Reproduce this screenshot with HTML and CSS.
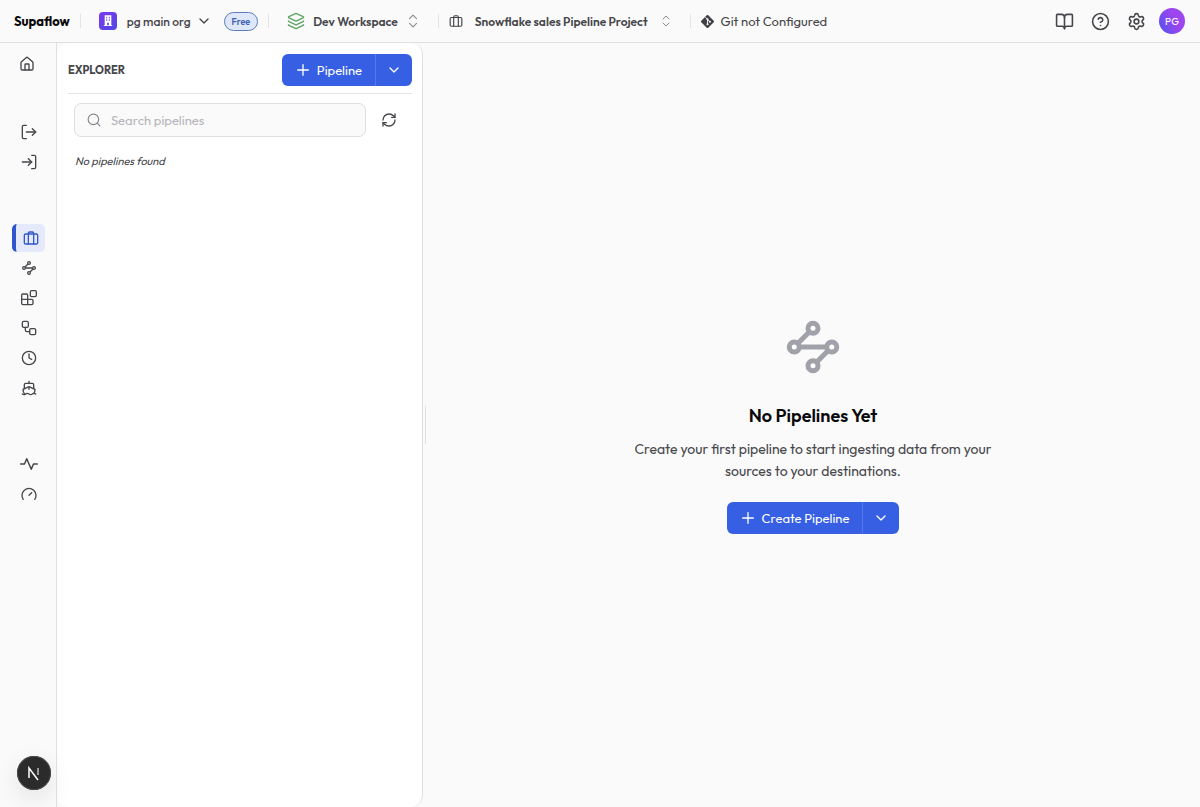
FILE: index.html
```html
<!DOCTYPE html>
<html lang="en">
<head>
    <meta charset="UTF-8">
    <meta name="viewport" content="width=device-width, initial-scale=1.0">
    <title>Supaflow</title>
    <link rel="stylesheet" href="styles.css">
</head>
<body>
    <!-- Shared icons -->
    <svg class="sprite" aria-hidden="true">
        <symbol id="chevron-down" viewBox="0 0 24 24"><path d="m6 9 6 6 6-6"/></symbol>
        <symbol id="chevrons" viewBox="0 0 24 24"><path d="m6 16 6 6 6-6"/><path d="m6 8 6-6 6 6"/></symbol>
        <symbol id="plus" viewBox="0 0 24 24"><path d="M4 12h16"/><path d="M12 4v16"/></symbol>
        <symbol id="luggage" viewBox="0 0 24 24"><rect x="2" y="6" width="20" height="15" rx="2"/><path d="M8 21V5a2 2 0 0 1 2-2h4a2 2 0 0 1 2 2v16"/></symbol>
        <symbol id="waypoints" viewBox="0 0 24 24"><path d="M12 4.5 4.5 12h15L12 19.5"/><g fill="#fff"><circle cx="12" cy="4.500" r="2"/><circle cx="4.500" cy="12" r="2"/><circle cx="19.500" cy="12" r="2"/><circle cx="12" cy="19.500" r="2"/></g></symbol>
    </svg>

    <header class="topbar">
        <a href="#" class="brand">Supaflow</a>
        <span class="divider"></span>
        <button class="picker org">
            <span class="org-badge">
                <svg viewBox="0 0 12 14"><path fill="#fff" fill-rule="evenodd" d="M2 0h8v12h1v1H1v-1h1zM4 2v2h1V2zM7 2v2h1V2zM4 5v2h1V5zM7 5v2h1V5zM5 9v3h2V9z"/></svg>
            </span>
            <span>pg main org</span>
            <svg class="icon"><use href="#chevron-down"/></svg>
        </button>
        <span class="plan">Free</span>
        <span class="divider"></span>
        <button class="picker workspace">
            <svg class="icon icon-lg green" viewBox="0 0 24 24"><path d="M12.8 2.2a2 2 0 0 0-1.7 0L2.6 6.1a1 1 0 0 0 0 1.8l8.600 3.900a2 2 0 0 0 1.700 0l8.600-3.900a1 1 0 0 0 0-1.800z"/><path d="M2 12a1 1 0 0 0 .6.9l8.600 3.900a2 2 0 0 0 1.700 0l8.500-3.900A1 1 0 0 0 22 12"/><path d="M2 17a1 1 0 0 0 .6.9l8.600 3.900a2 2 0 0 0 1.700 0l8.500-3.900A1 1 0 0 0 22 17"/></svg>
            <span>Dev Workspace</span>
            <svg class="icon icon-md faint"><use href="#chevrons"/></svg>
        </button>
        <span class="divider"></span>
        <button class="picker project">
            <svg class="icon icon-md"><use href="#luggage"/></svg>
            <span>Snowflake sales Pipeline Project</span>
            <svg class="icon icon-sm faint"><use href="#chevrons"/></svg>
        </button>
        <span class="divider"></span>
        <button class="picker git">
            <svg class="git-logo" viewBox="0 0 24 24"><path fill="#3f3f46" d="M10.6.6a2 2 0 0 1 2.800 0l10 10a2 2 0 0 1 0 2.800l-10 10a2 2 0 0 1-2.800 0l-10-10a2 2 0 0 1 0-2.800z"/><path d="m8 4 4 4v9M12 8l4.500 4.500" fill="none" stroke="#fafafa" stroke-width="1.800"/><g fill="#fafafa"><circle cx="12" cy="8" r="2"/><circle cx="12" cy="17" r="2"/><circle cx="16.500" cy="12.500" r="2"/></g></svg>
            <span>Git not Configured</span>
        </button>

        <div class="actions">
            <button class="icon-button" aria-label="Docs"><svg class="icon icon-xl" viewBox="0 0 24 24"><path d="M12 7v14"/><path d="M3 18a1 1 0 0 1-1-1V4a1 1 0 0 1 1-1h5a4 4 0 0 1 4 4 4 4 0 0 1 4-4h5a1 1 0 0 1 1 1v13a1 1 0 0 1-1 1h-6a3 3 0 0 0-3 3 3 3 0 0 0-3-3z"/></svg></button>
            <button class="icon-button" aria-label="Help"><svg class="icon icon-xl" viewBox="0 0 24 24"><circle cx="12" cy="12" r="10"/><path d="M9.100 9a3 3 0 0 1 5.800 1c0 2-3 3-3 3"/><path d="M12 17h.01"/></svg></button>
            <button class="icon-button" aria-label="Settings"><svg class="icon icon-xl" viewBox="0 0 24 24"><path d="M9.671 4.136a2.340 2.340 0 0 1 4.659 0 2.340 2.340 0 0 0 3.319 1.915 2.340 2.340 0 0 1 2.330 4.033 2.340 2.340 0 0 0 0 3.831 2.340 2.340 0 0 1-2.330 4.033 2.340 2.340 0 0 0-3.319 1.915 2.340 2.340 0 0 1-4.659 0 2.340 2.340 0 0 0-3.320-1.915 2.340 2.340 0 0 1-2.330-4.033 2.340 2.340 0 0 0 0-3.831A2.340 2.340 0 0 1 6.350 6.051a2.340 2.340 0 0 0 3.319-1.915"/><circle cx="12" cy="12" r="3"/></svg></button>
            <button class="avatar">PG</button>
        </div>
    </header>

    <div class="layout">
        <nav class="sidebar">
            <div class="nav-group home">
                <a href="#" class="nav-item" aria-label="Home"><svg class="icon" viewBox="0 0 24 24"><path d="M15 21v-8a1 1 0 0 0-1-1h-4a1 1 0 0 0-1 1v8"/><path d="M3 10a2 2 0 0 1 .7-1.500l7-6a2 2 0 0 1 2.600 0l7 6A2 2 0 0 1 21 10v9a2 2 0 0 1-2 2H5a2 2 0 0 1-2-2z"/></svg></a>
            </div>
            <div class="nav-group">
                <a href="#" class="nav-item" aria-label="Sources"><svg class="icon" viewBox="0 0 24 24"><path d="M8 2H4a2 2 0 0 0-2 2v16a2 2 0 0 0 2 2h4"/><path d="M8 12h14"/><path d="m17 7 5 5-5 5"/></svg></a>
                <a href="#" class="nav-item" aria-label="Destinations"><svg class="icon" viewBox="0 0 24 24"><path d="M16 2h4a2 2 0 0 1 2 2v16a2 2 0 0 1-2 2h-4"/><path d="M2 12h14"/><path d="m11 7 5 5-5 5"/></svg></a>
            </div>
            <div class="nav-group">
                <a href="#" class="nav-item active" aria-label="Projects"><svg class="icon"><use href="#luggage"/></svg></a>
                <a href="#" class="nav-item" aria-label="Pipelines"><svg class="icon"><use href="#waypoints"/></svg></a>
                <a href="#" class="nav-item" aria-label="Blocks"><svg class="icon" viewBox="0 0 24 24"><rect x="14" y="1" width="9" height="9" rx="2"/><path d="M10 22V8a2 2 0 0 0-2-2H3a2 2 0 0 0-2 2v12a2 2 0 0 0 2 2h13a2 2 0 0 0 2-2v-4a2 2 0 0 0-2-2H1"/></svg></a>
                <a href="#" class="nav-item" aria-label="Workflows"><svg class="icon" viewBox="0 0 24 24"><rect x="2" y="2" width="9" height="9" rx="2"/><path d="M6.500 11v4a2.500 2.500 0 0 0 2.500 2.500h4"/><rect x="13" y="13" width="9" height="9" rx="2"/></svg></a>
                <a href="#" class="nav-item" aria-label="Schedules"><svg class="icon" viewBox="0 0 24 24"><circle cx="12" cy="12" r="10"/><path d="M12 6v6l4 2"/></svg></a>
                <a href="#" class="nav-item" aria-label="Deployments"><svg class="icon" viewBox="0 0 24 24"><path d="M12 10.200V14M12 2v3"/><path d="M19 13V7a2 2 0 0 0-2-2H7a2 2 0 0 0-2 2v6"/><path d="M19.400 20A11.600 11.600 0 0 0 21 14l-8.200-3.600a2 2 0 0 0-1.600 0L3 14a11.600 11.600 0 0 0 2.800 7.800"/><path d="M2 21c.6.5 1.200 1 2.500 1 2.500 0 2.500-2 5-2 1.300 0 1.900.5 2.500 1s1.200 1 2.500 1c2.500 0 2.500-2 5-2 1.300 0 1.900.5 2.500 1"/></svg></a>
            </div>
            <div class="nav-group">
                <a href="#" class="nav-item" aria-label="Activity"><svg class="icon icon-lg" viewBox="0 0 24 24"><path d="M1 12h5l3-7 6 14 3-7h5"/></svg></a>
                <a href="#" class="nav-item" aria-label="Usage"><svg class="icon" viewBox="0 0 24 24"><path d="m12 14 4-4"/><path d="M3.300 20a10.500 10.500 0 1 1 17.400 0"/></svg></a>
            </div>
        </nav>

        <section class="explorer">
            <div class="explorer-header">
                <h2>EXPLORER</h2>
                <div class="split-button">
                    <button class="split-main"><svg class="icon"><use href="#plus"/></svg>Pipeline</button>
                    <button class="split-toggle" aria-label="More pipeline options"><svg class="icon"><use href="#chevron-down"/></svg></button>
                </div>
            </div>
            <div class="search-row">
                <label class="search">
                    <svg class="icon icon-md" viewBox="0 0 24 24"><circle cx="11" cy="11" r="9"/><path d="m22 22-4.500-4.500"/></svg>
                    <input type="search" placeholder="Search pipelines" aria-label="Search pipelines">
                </label>
                <button class="icon-button" aria-label="Refresh"><svg class="icon" viewBox="0 0 24 24"><path d="M3 12a9 9 0 0 1 9-9 9.750 9.750 0 0 1 6.740 2.740L21 8"/><path d="M21 3v5h-5"/><path d="M21 12a9 9 0 0 1-9 9 9.750 9.750 0 0 1-6.740-2.740L3 16"/><path d="M8 16H3v5"/></svg></button>
            </div>
            <p class="no-results">No pipelines found</p>
        </section>

        <div class="resizer"></div>

        <main class="content">
            <svg class="icon empty-icon"><use href="#waypoints"/></svg>
            <h1>No Pipelines Yet</h1>
            <p>Create your first pipeline to start ingesting data from your sources to your destinations.</p>
            <div class="split-button">
                <button class="split-main"><svg class="icon"><use href="#plus"/></svg>Create Pipeline</button>
                <button class="split-toggle" aria-label="More create options"><svg class="icon"><use href="#chevron-down"/></svg></button>
            </div>
        </main>
    </div>

    <button class="dev-badge" aria-label="Dev tools">
        <svg viewBox="0 0 16 16"><path d="M3 13V3l9 12" fill="none" stroke="#fff" stroke-width="1.500"/><path d="M12 3v7" fill="none" stroke="#bbb" stroke-width="1.500"/></svg>
    </button>
</body>
</html>
```
FILE: styles.css
```css
* {
    box-sizing: border-box;
}
body {
    margin: 0;
    min-height: 100vh;
    display: flex;
    flex-direction: column;
    font-family: Outfit, Lato, sans-serif;
    font-size: 13px;
    color: #46464b;
    background-color: #fafafa;
}
h1, h2, p {
    margin: 0;
}
a {
    color: inherit;
    text-decoration: none;
}
button {
    padding: 0;
    border: none;
    background: none;
    color: inherit;
    font: inherit;
    cursor: pointer;
}
.sprite {
    display: none;
}
.icon {
    width: 16px;
    height: 16px;
    flex-shrink: 0;
    fill: none;
    stroke: currentColor;
    stroke-width: 2;
    stroke-linecap: round;
    stroke-linejoin: round;
}
.icon-sm {
    width: 12px;
    height: 12px;
}
.icon-md {
    width: 14px;
    height: 14px;
}
.icon-lg {
    width: 18px;
    height: 18px;
}
.icon-xl {
    width: 19px;
    height: 19px;
}
.green {
    color: #5fa568;
}
.faint {
    color: #8b8b92;
}

/* Top bar */
.topbar {
    display: flex;
    align-items: center;
    height: 43px;
    padding: 0 15px 0 14px;
    border-bottom: 1px solid #e0e0e2;
    white-space: nowrap;
}
.brand {
    color: #09090b;
    font-weight: 700;
}
.divider {
    width: 1px;
    height: 14px;
    margin: 0 10px;
    background-color: #e4e4e7;
}
.picker {
    display: flex;
    align-items: center;
    gap: 8px;
    font-size: 12px;
    font-weight: 600;
}
.org {
    gap: 10px;
    margin: 0 12px 0 8px;
    font-weight: 500;
}
.org .icon {
    margin-left: -5px;
}
.org-badge {
    display: flex;
    align-items: center;
    justify-content: center;
    width: 18px;
    height: 18px;
    border-radius: 4px;
    background: linear-gradient(135deg, #7c3aed, #4f46e5);
}
.org-badge svg {
    width: 10px;
    height: 12px;
}
.plan {
    padding: 0 7px;
    border: 1px solid #5c7cc0;
    border-radius: 10px;
    background-color: #dfe8fb;
    color: #3f62b5;
    font-size: 9px;
    font-weight: 600;
    line-height: 17px;
}
.workspace {
    margin: 0 8px;
}
.project {
    gap: 12px;
    margin-right: 8px;
}
.git {
    gap: 7px;
    font-size: 13px;
    font-weight: 400;
}
.git-logo {
    width: 13px;
    height: 13px;
}
.actions {
    display: flex;
    align-items: center;
    margin-left: auto;
}
.icon-button {
    display: flex;
    justify-content: center;
}
.actions .icon-button {
    width: 36px;
}
.avatar {
    width: 26px;
    height: 26px;
    margin-left: 5px;
    border-radius: 50%;
    background: linear-gradient(60deg, #4f52ee, #9d45ef 60%);
    color: #fff;
    font-size: 10px;
}

/* Sidebar */
.layout {
    display: flex;
    flex: 1;
}
.sidebar {
    display: flex;
    flex-direction: column;
    gap: 48px;
    width: 57px;
    padding: 7px 11px 0 12px;
    border-right: 1px solid #e0e0e2;
}
.nav-group {
    display: flex;
    flex-direction: column;
    gap: 2px;
}
.home {
    margin: 0 3px -8px 0;
}
.nav-item {
    display: flex;
    align-items: center;
    justify-content: center;
    height: 28px;
    border-radius: 5px;
}
.nav-item.active {
    border-left: 4px solid #2f55cd;
    background-color: #e4eafb;
    color: #3157c8;
}

/* Explorer */
.explorer {
    width: 366px;
    padding: 11px 10px 11px 11px;
    border-right: 1px solid #e0e0e2;
    border-radius: 12px;
    background-color: #fff;
}
.explorer-header {
    display: flex;
    align-items: center;
    justify-content: space-between;
    padding-bottom: 7px;
    border-bottom: 1px solid #e4e4e7;
}
.explorer-header h2 {
    font-size: 11px;
    font-weight: 700;
}
.split-button {
    display: flex;
    height: 32px;
    border-radius: 6px;
    background-color: #365fe3;
    color: #fff;
}
.split-main {
    display: flex;
    align-items: center;
    gap: 6px;
    padding: 0 13px;
}
.split-toggle {
    display: flex;
    align-items: center;
    justify-content: center;
    width: 37px;
    border-left: 1px solid #5478e8;
}
.search-row {
    display: flex;
    align-items: center;
    gap: 15px;
    padding: 9px 15px 0 6px;
}
.search {
    display: flex;
    flex: 1;
    align-items: center;
    gap: 10px;
    height: 34px;
    padding: 0 12px;
    border: 1px solid #e0e0e2;
    border-radius: 7px;
    background-color: #fafafa;
    color: #85858d;
}
.search input {
    flex: 1;
    min-width: 0;
    padding: 0;
    border: none;
    outline: none;
    background: none;
    font: inherit;
}
.search input::placeholder {
    color: #b5b5bb;
}
.no-results {
    padding: 16px 7px;
    font-size: 11px;
    font-style: italic;
    line-height: 16px;
}
.resizer {
    align-self: center;
    width: 3px;
    height: 38px;
    border-right: 1px solid #e0e0e2;
}

/* Empty state */
.content {
    display: flex;
    flex: 1;
    flex-direction: column;
    align-items: center;
    justify-content: center;
}
.empty-icon {
    width: 60px;
    height: 60px;
    color: #a1a1aa;
}
.content h1 {
    margin: 25px 0 8px;
    color: #09090b;
    font-size: 18px;
    font-weight: 600;
    line-height: 28px;
}
.content p {
    max-width: 384px;
    margin-bottom: 20px;
    font-size: 14px;
    line-height: 22px;
    text-align: center;
}

.dev-badge {
    position: fixed;
    left: 17px;
    bottom: 17px;
    display: flex;
    align-items: center;
    justify-content: center;
    width: 34px;
    height: 34px;
    border-radius: 50%;
    background-color: #2b2b2b;
    box-shadow: 0 0 0 1px #4a4a4a inset, 0 8px 24px rgba(0, 0, 0, 0.1);
}
.dev-badge svg {
    width: 16px;
    height: 16px;
}
```
